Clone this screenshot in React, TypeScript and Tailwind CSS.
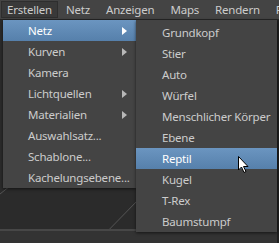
import React from "react";

const MAIN = [
  { label: "Netz", sub: true, active: true },
  { label: "Kurven", sub: true },
  { label: "Kamera" },
  { label: "Lichtquellen", sub: true },
  { label: "Materialien", sub: true },
  { label: "Auswahlsatz..." },
  { label: "Schablone..." },
  { label: "Kachelungsebene..." },
];

const NETZ = [
  "Grundkopf",
  "Stier",
  "Auto",
  "Würfel",
  "Menschlicher Körper",
  "Ebene",
  "Reptil",
  "Kugel",
  "T-Rex",
  "Baumstumpf",
];

const BAR = ["Netz", "Anzeigen", "Maps", "Rendern", "F"];

function Arrow({ active }: { active?: boolean }) {
  return (
    <svg width="5" height="8" viewBox="0 0 5 8" className="shrink-0">
      <path d="M0 0 L5 4 L0 8 Z" fill={active ? "#ffffff" : "#b8b8b8"} />
    </svg>
  );
}

export default function App() {
  return (
    <div className="relative w-[279px] h-[243px] overflow-hidden bg-[#2b2b2b] font-['Noto_Sans',sans-serif] text-[11.5px] tracking-[-0.2px] leading-none text-[#cccccc] whitespace-nowrap">
      {/* menubar */}
      <div className="flex h-[20px] items-stretch bg-[#444444] border-b border-[#262626] pl-[1px]">
        <div className="flex items-center px-[5px] my-[1px] bg-[#393939] border border-[#2e2e2e]">Erstellen</div>
        {BAR.map(b => (
          <div key={b} className="flex items-center px-[8px]">{b}</div>
        ))}
      </div>

      {/* viewport behind */}
      <svg className="absolute left-0 top-[20px]" width="279" height="223" viewBox="0 0 279 223">
        <rect x="0" y="0" width="279" height="223" fill="#2b2b2b" />
        <line x1="0" y1="174" x2="10" y2="166" stroke="#555" strokeWidth="1" />
        <line x1="96" y1="223" x2="140" y2="178" stroke="#555" strokeWidth="1" />
        <line x1="256" y1="223" x2="266" y2="210" stroke="#555" strokeWidth="1" />
        <rect x="0" y="209" width="279" height="2" fill="#474747" />
        <rect x="0" y="211" width="279" height="12" fill="#333333" />
        <rect x="277" y="0" width="2" height="223" fill="#1f1f1f" />
      </svg>

      {/* dropdowns */}
      <div className="absolute left-[3px] top-[20px] flex items-start">
        <div className="w-[133px] bg-[#444444] shadow-[0_1px_3px_rgba(0,0,0,0.6)]">
          {MAIN.map(m => (
            <div
              key={m.label}
              className={`flex h-[21px] items-center justify-between pl-[25px] pr-[9px] ${m.active ? "bg-gradient-to-b from-[#6b95c0] to-[#5680ab] text-white" : ""}`}
            >
              <span>{m.label}</span>
              {m.sub && <Arrow active={m.active} />}
            </div>
          ))}
        </div>
        <div className="w-[141px] pt-[2px] bg-[#444444] shadow-[0_1px_3px_rgba(0,0,0,0.6)]">
          {NETZ.map(n => (
            <div
              key={n}
              className={`flex h-[21px] items-center pl-[26px] ${n === "Reptil" ? "bg-gradient-to-b from-[#6b95c0] to-[#5680ab] text-white" : ""}`}
            >
              {n}
            </div>
          ))}
        </div>
      </div>

      {/* mouse cursor */}
      <svg className="absolute left-[238px] top-[156px]" width="12" height="18" viewBox="0 0 12 18">
        <path d="M0.5 0.5 L0.5 14 L3.5 11 L6 16.5 L8 15.5 L5.5 10.5 L10 10.5 Z" fill="#ffffff" stroke="#000000" strokeWidth="1" />
      </svg>
    </div>
  );
}
